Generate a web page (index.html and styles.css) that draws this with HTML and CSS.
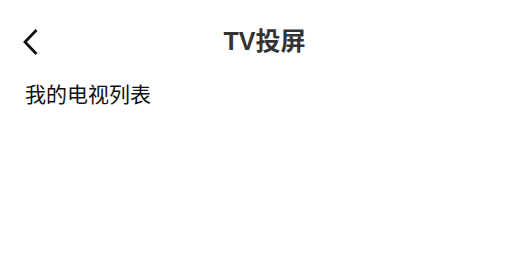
FILE: index.html
```html
<!DOCTYPE html>
<html lang="zh-CN">
<head>
    <meta charset="UTF-8">
    <meta name="viewport" content="width=device-width, initial-scale=1.0">
    <title>TV投屏</title>
    <link rel="stylesheet" href="styles.css">
</head>
<body>
    <div class="page">
        <header class="nav-bar">
            <button class="back-btn" aria-label="返回">
                <svg width="16" height="26" viewBox="0 0 16 26">
                    <path d="M13.5 2 L3 13 L13.5 24" fill="none" stroke="#111" stroke-width="2.8" stroke-linecap="square" stroke-linejoin="miter"/>
                </svg>
            </button>
            <h1 class="nav-title">TV投屏</h1>
        </header>
        <div class="section-title">我的电视列表</div>
    </div>
</body>
</html>
```

FILE: styles.css
```css
body {
    font-family: "Noto Sans CJK SC", "Noto Sans", sans-serif;
    background-color: #fff;
    margin: 0;
    padding: 0;
}

.page {
    width: 100%;
}

.nav-bar {
    position: relative;
    height: 78px;
    display: flex;
    align-items: center;
    justify-content: center;
}

.back-btn {
    position: absolute;
    left: 22px;
    top: 29px;
    background: none;
    border: none;
    padding: 0;
    cursor: pointer;
    line-height: 0;
}

.nav-title {
    margin: 0 0 0 -2px;
    font-family: "Liberation Sans", "Noto Sans CJK SC", sans-serif;
    font-size: 25px;
    font-weight: bold;
    color: #333;
}

.section-title {
    padding: 0 25px;
    font-size: 21px;
    line-height: 30px;
    color: #111;
}
```
